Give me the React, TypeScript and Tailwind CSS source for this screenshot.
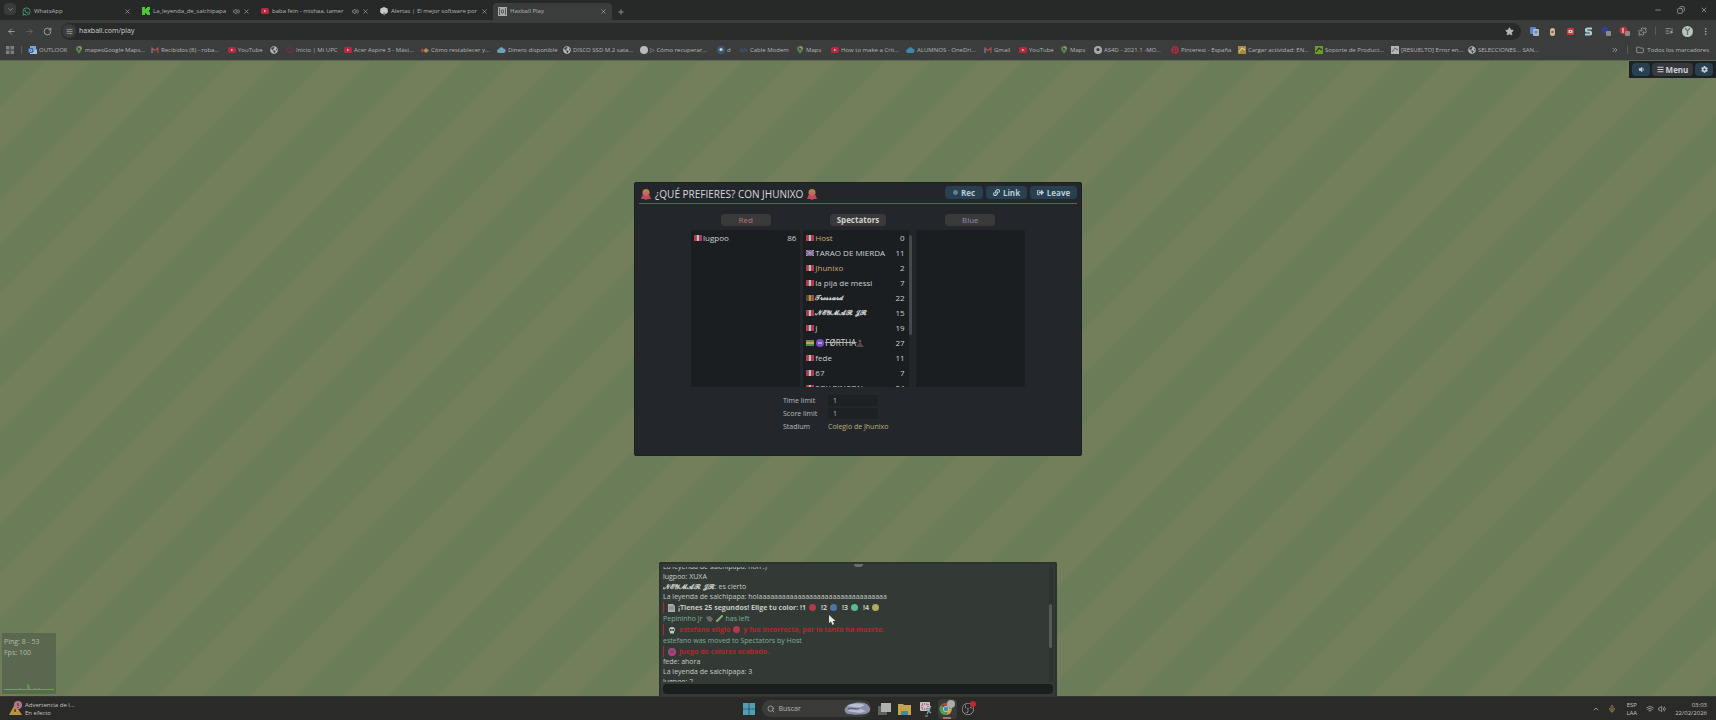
import React from 'react';
import {
  ChevronDown, ChevronUp, X, Plus, ArrowLeft, ArrowRight, RotateCw, SlidersHorizontal, Star, Puzzle,
  ListMusic, MoreVertical, Minus, Copy, Folder, Volume2, Search, ChevronsRight, Wifi, Mic,
} from 'lucide-react';
import { FaWhatsapp, FaPinterest, FaGlobeAmericas, FaCog, FaBars, FaVolumeDown, FaLink, FaSignOutAlt, FaCircle } from 'react-icons/fa';
import { SiObsstudio } from 'react-icons/si';
import clsx from 'clsx';

const tabs = [
  { title: 'WhatsApp', icon: <FaWhatsapp size={9} className="text-[#4fae84]" />, audio: false },
  { title: 'La_leyenda_de_salchipapa', icon: <KickIcon />, audio: true },
  { title: 'baba fein - mishaa, tamer', icon: <YtIcon />, audio: true },
  { title: 'Alertas | El mejor software por', icon: <Shield />, audio: false },
  { title: 'Haxball Play', icon: <HaxIcon />, audio: false, active: true },
];

function KickIcon() {
  return (
    <svg width="8" height="8" viewBox="0 0 8 8">
      <path d="M0 0h3v2h1V1h1V0h3v3H7v2h1v3H5V7H4V6H3v2H0z" fill="#4fc639" />
    </svg>
  );
}

function YtIcon() {
  return (
    <svg width="8" height="8" viewBox="0 0 8 8">
      <rect y="1" width="8" height="6" rx="1.5" fill="#b32a40" />
      <path d="M3 2.7L5.500 4 3 5.300z" fill="#e0aab2" />
    </svg>
  );
}

function Shield() {
  return (
    <svg width="8" height="9" viewBox="0 0 8 9">
      <path d="M4 0l3.500 1.500L8 5 6 7H2L0 5l.5-3.500z" fill="#c9c9c9" />
      <path d="M4 5l1.500 1L4 9 3 6z" fill="#8a8a8a" />
    </svg>
  );
}

function HaxIcon() {
  return (
    <svg width="9" height="9" viewBox="0 0 9 9">
      <rect width="9" height="9" fill="#a9aba8" />
      <path d="M1.500 1v7M7.500 1v7M3.500 3h2v3h-2z" stroke="#5c5e5c" strokeWidth="1" fill="none" />
    </svg>
  );
}

function GmailIcon() {
  return (
    <svg width="8" height="6" viewBox="0 0 8 6">
      <path d="M1 6V1l3 2.500L7 1v5" stroke="#a5544c" strokeWidth="1.200" fill="none" />
      <path d="M1 6V2" stroke="#5d7fa8" strokeWidth="1.200" />
    </svg>
  );
}

function Pin() {
  return (
    <svg width="6" height="8" viewBox="0 0 6 8">
      <path d="M3 8C2 5.500 0 5 0 3a3 3 0 016 0c0 2-2 2.500-3 5z" fill="#5f7f57" />
      <path d="M3 0a3 3 0 013 3L3 3z" fill="#98915c" />
      <circle cx="3" cy="3" r="1" fill="#3a3b3b" />
    </svg>
  );
}

function Dot({ fill, inner }: { fill: string; inner?: string }) {
  return (
    <svg width="8" height="8" viewBox="0 0 8 8">
      <circle cx="4" cy="4" r="4" fill={fill} />
      {inner && <circle cx="4" cy="3.500" r="1.600" fill={inner} />}
    </svg>
  );
}

function Square({ fill, mark }: { fill: string; mark: string }) {
  return (
    <svg width="8" height="8" viewBox="0 0 8 8">
      <rect width="8" height="8" fill={fill} />
      <path d="M1 6l3-4 3 2" stroke={mark} strokeWidth="1.200" fill="none" />
    </svg>
  );
}

function CloudIcon({ fill }: { fill: string }) {
  return (
    <svg width="9" height="6" viewBox="0 0 9 6">
      <path d="M2 6a2 2 0 010-4 2.500 2.500 0 014.500-.5A2.300 2.300 0 017 6z" fill={fill} />
    </svg>
  );
}

function OutlookIcon() {
  return (
    <svg width="9" height="8" viewBox="0 0 9 8">
      <rect x="2" width="6" height="5" fill="#7fa4d0" />
      <path d="M2 4l3 2 4-3v5H2z" fill="#a9c0dc" />
      <rect y="2" width="5" height="5" rx="1" fill="#2f62a8" />
      <circle cx="2.500" cy="4.500" r="1.200" stroke="#cdd9ea" strokeWidth=".8" fill="none" />
    </svg>
  );
}

function UpcIcon() {
  return (
    <svg width="8" height="8" viewBox="0 0 8 8">
      <path d="M1 2c0 6 6 6 6 1M4 0v3" stroke="#85293a" strokeWidth="1.200" fill="none" />
    </svg>
  );
}

function Diamond() {
  return (
    <svg width="9" height="7" viewBox="0 0 9 7">
      <path d="M0 3.500L3 1v5z" fill="#a04444" />
      <path d="M3 3.500L6 1l3 2.500L6 6z" fill="#b08a5c" />
    </svg>
  );
}

function Bars() {
  return (
    <svg width="8" height="6" viewBox="0 0 8 6">
      <path d="M1 1v4M3 2v3M5 1v4M7 2v3" stroke="#43586e" strokeWidth="1" />
    </svg>
  );
}

const globe = <FaGlobeAmericas size={8} className="text-[#b4b4b4]" />;

const bookmarks = [
  { label: 'OUTLOOK', width: 'w-[46px]', icon: <OutlookIcon /> },
  { label: 'mapesGoogle Maps...', width: 'w-[76px]', icon: <Pin /> },
  { label: 'Recibidos (8) - roba...', width: 'w-[77px]', icon: <GmailIcon /> },
  { label: 'YouTube', width: 'w-[42px]', icon: <YtIcon /> },
  { label: '', width: 'w-[16px]', icon: globe },
  { label: 'Inicio | Mi UPC', width: 'w-[58px]', icon: <UpcIcon /> },
  { label: 'Acer Aspire 3 - Máxi...', width: 'w-[77px]', icon: <YtIcon /> },
  { label: 'Cómo restablecer y...', width: 'w-[77px]', icon: <Diamond /> },
  { label: 'Dinero disponible', width: 'w-[65px]', icon: <CloudIcon fill="#6fa0b8" /> },
  { label: 'DISCO SSD M.2 sata...', width: 'w-[77px]', icon: globe },
  { label: '▷ Cómo recuperar...', width: 'w-[77px]', icon: <Dot fill="#b9b9b9" /> },
  { label: 'd', width: 'w-[23px]', icon: <Dot fill="#3b5878" inner="#c8d2dc" /> },
  { label: 'Cable Modem', width: 'w-[56px]', icon: <Bars /> },
  { label: 'Maps', width: 'w-[35px]', icon: <Pin /> },
  { label: 'How to make a Crit...', width: 'w-[76px]', icon: <YtIcon /> },
  { label: 'ALUMNOS - OneDri...', width: 'w-[77px]', icon: <CloudIcon fill="#3f87ad" /> },
  { label: 'Gmail', width: 'w-[35px]', icon: <GmailIcon /> },
  { label: 'YouTube', width: 'w-[41px]', icon: <YtIcon /> },
  { label: 'Maps', width: 'w-[34px]', icon: <Pin /> },
  { label: 'AS4D - 2021.1 -MO...', width: 'w-[77px]', icon: <Dot fill="#a9a9a9" inner="#3a3b3b" /> },
  { label: 'Pinterest - España', width: 'w-[67px]', icon: <FaPinterest size={8} className="text-[#c02a45]" /> },
  { label: 'Cargar actividad: EN...', width: 'w-[77px]', icon: <Square fill="#a88a45" mark="#d8c890" /> },
  { label: 'Soporte de Product...', width: 'w-[76px]', icon: <Square fill="#6f9a2c" mark="#24301a" /> },
  { label: '[RESUELTO] Error en...', width: 'w-[77px]', icon: <Square fill="#b5b5b5" mark="#777777" /> },
  { label: 'SELECCIONES... SAN...', width: 'w-[77px]', icon: globe },
];

function Extensions() {
  return (
    <>
      <svg width="9" height="9" viewBox="0 0 9 9">
        <rect width="6" height="7" rx="1" fill="#5c83c8" />
        <rect x="3" y="2" width="6" height="7" rx="1" fill="#a8b4cc" />
        <path d="M4.500 5h3M6 4v3" stroke="#5a6b8a" strokeWidth=".8" />
      </svg>
      <svg width="9" height="9" viewBox="0 0 9 9">
        <rect x="2" y="1" width="5" height="8" rx="2.500" fill="#c9bba2" />
        <circle cx="4.500" cy="5" r="1.300" fill="#a8543c" />
      </svg>
      <svg width="9" height="9" viewBox="0 0 9 9">
        <rect x="1" y="1" width="7" height="7" rx="1.500" fill="#c23c44" />
        <rect x="2.500" y="3" width="4" height="3" fill="#e0c0c0" />
        <rect x="4" y="4" width="1" height="1" fill="#c23c44" />
      </svg>
      <svg width="9" height="9" viewBox="0 0 9 9">
        <path d="M8 1.500H3.500a1.500 1.500 0 000 3h2a1.500 1.500 0 010 3H1" stroke="#a9ccd6" strokeWidth="2.200" fill="none" />
      </svg>
      <svg width="11" height="11" viewBox="0 0 11 11">
        <circle cx="4" cy="4" r="3.500" fill="#33408f" />
        <rect x="5" y="5" width="5" height="5" rx="1" fill="#8a8a8a" />
      </svg>
      <svg width="11" height="11" viewBox="0 0 11 11">
        <circle cx="4.500" cy="4.500" r="4" fill="#b8323a" />
        <path d="M4 2v5" stroke="#e0d0d0" strokeWidth="1.300" />
        <rect x="6" y="5" width="5" height="5" rx="1" fill="#8a8a8a" />
      </svg>
    </>
  );
}

function Browser() {
  return (
    <header className="shrink-0 text-[6px] leading-[8px] text-[#b4b6b4]">
      <div className="h-5 bg-[#272928] flex items-end">
        <div className="w-[17px] h-[17px] shrink-0 pl-1">
          <button aria-label="Buscar pestañas" className="size-3 rounded-sm bg-[#3a3c3b] flex items-center justify-center">
            <ChevronDown size={7} />
          </button>
        </div>
        {tabs.map((tab) => (
          <div
            key={tab.title}
            className={clsx(
              'w-[119px] h-[17px] shrink-0 flex items-center gap-[3px] px-[5px] pb-px rounded-t',
              tab.active && 'bg-[#3b3d3c]'
            )}
          >
            <span className="w-[9px] shrink-0 flex justify-center">{tab.icon}</span>
            <span className="whitespace-nowrap">{tab.title}</span>
            {tab.audio && <Volume2 size={7} className="ml-auto shrink-0" />}
            <button aria-label={`Cerrar ${tab.title}`} className={clsx('shrink-0', !tab.audio && 'ml-auto')}>
              <X size={7} />
            </button>
          </div>
        ))}
        <button aria-label="Nueva pestaña" className="h-[17px] px-[5px] flex items-center"><Plus size={8} /></button>
        <div className="ml-auto h-5 flex items-center gap-[15px] pr-2">
          <button aria-label="Minimizar"><Minus size={8} /></button>
          <button aria-label="Restaurar"><Copy size={8} className="-scale-x-100" /></button>
          <button aria-label="Cerrar"><X size={8} /></button>
        </div>
      </div>

      <div className="h-[21px] pt-px bg-[#3b3d3c] flex items-center">
        <div className="w-[61px] shrink-0 flex items-center gap-[9px] pl-[7px]">
          <button aria-label="Atrás"><ArrowLeft size={9} /></button>
          <button aria-label="Adelante" className="text-[#6c6e6c]"><ArrowRight size={9} /></button>
          <button aria-label="Recargar"><RotateCw size={9} /></button>
        </div>
        <div className="flex-1 h-[17px] rounded-full bg-[#292b2a] flex items-center pl-[1px] pr-[7px]">
          <span className="size-[14px] rounded-full bg-[#3b3d3c] flex items-center justify-center">
            <SlidersHorizontal size={7} />
          </span>
          <input
            aria-label="Dirección"
            defaultValue="haxball.com/play"
            className="flex-1 pl-[3px] bg-transparent text-[7px] leading-[10px] text-[#cfd1cf] outline-none"
          />
          <Star size={9} fill="currentColor" />
        </div>
        <div className="flex items-center pl-1 pr-0.5">
          <div className="grid grid-cols-[repeat(7,18px)] justify-items-center items-center">
            <Extensions />
            <Puzzle size={9} />
          </div>
          <span className="w-px h-2 mx-1 bg-[#5a5c5a]" />
          <div className="grid grid-cols-[repeat(3,18px)] justify-items-center items-center">
            <ListMusic size={8} />
            <span className="size-[11px] rounded-full bg-[#b9c4bd] flex items-center justify-center">
              <svg width="7" height="8" viewBox="0 0 7 8"><path d="M1 1l2.500 3L6 1M3.500 4v4" stroke="#66766d" strokeWidth="1.200" fill="none" /></svg>
            </span>
            <MoreVertical size={9} />
          </div>
        </div>
      </div>

      <nav className="h-5 pb-px bg-[#3b3d3c] border-b border-[#5e6650] flex items-center pl-1.5 pr-[7px]">
        <svg width="8" height="8" viewBox="0 0 8 8" className="shrink-0">
          <path d="M0 0h3.500v3.500H0zM4.500 0H8v3.500H4.500zM0 4.500h3.500V8H0zM4.500 4.500H8V8H4.500z" fill="#7d7f7d" />
        </svg>
        <span className="w-px h-2 ml-[7px] mr-[6px] shrink-0 bg-[#5a5c5a]" />
        {bookmarks.map((b, i) => (
          <a key={i} href="#" aria-label={b.label || 'Marcador'} className={clsx('shrink-0 flex items-center gap-[2px] whitespace-nowrap', b.width)}>
            <span className="w-[9px] shrink-0 flex justify-center">{b.icon}</span>
            {b.label}
          </a>
        ))}
        <ChevronsRight size={8} className="ml-auto" />
        <span className="w-px h-2 mx-2 shrink-0 bg-[#5a5c5a]" />
        <a href="#" className="flex items-center gap-[3px] whitespace-nowrap">
          <Folder size={8} />
          Todos los marcadores
        </a>
      </nav>
    </header>
  );
}

const stripes: Record<string, string[]> = {
  pe: ['#b23a4c', '#c9b8b8', '#b23a4c'],
  be: ['#4f4a3c', '#b59a3c', '#a8503c'],
};

function Flag({ code }: { code: string }) {
  return (
    <svg width="8" height="6" viewBox="0 0 8 6" className="shrink-0">
      {stripes[code]?.map((c, i) => <rect key={i} x={i * 2.667} width="2.667" height="6" fill={c} />)}
      {code === 'gb' && (
        <>
          <rect width="8" height="6" fill="#5a5790" />
          <path d="M0 0l8 6M8 0L0 6" stroke="#b9a8bc" strokeWidth="1" />
          <path d="M0 3h8M4 0v6" stroke="#b78a9c" strokeWidth="1" />
        </>
      )}
      {code === 'bo' && (
        <>
          <rect width="8" height="2" fill="#8a7a3c" />
          <rect y="2" width="8" height="2" fill="#b3ac54" />
          <rect y="4" width="8" height="2" fill="#4f8a4c" />
        </>
      )}
    </svg>
  );
}

interface Player {
  name: string;
  avatar: number;
  flag: string;
  admin?: boolean;
  script?: boolean;
}

const red: Player[] = [{ name: 'lugpoo', avatar: 86, flag: 'pe' }];

const spectators: Player[] = [
  { name: 'Host', avatar: 0, flag: 'pe', admin: true },
  { name: 'TARAO DE MIERDA', avatar: 11, flag: 'gb' },
  { name: 'Jhunixo', avatar: 2, flag: 'pe', admin: true },
  { name: 'la pija de messi', avatar: 7, flag: 'pe' },
  { name: '𝓣𝓻𝓸𝓼𝓼𝓪𝓻𝓭', avatar: 22, flag: 'be', script: true },
  { name: '𝓝𝓔𝓨𝓜𝓐𝓡 𝓙𝓡', avatar: 15, flag: 'pe', script: true },
  { name: 'J', avatar: 19, flag: 'pe' },
  { name: 'F̶Ø̶R̶T̶H̶A̶', avatar: 27, flag: 'bo' },
  { name: 'fede', avatar: 11, flag: 'pe' },
  { name: '67', avatar: 7, flag: 'pe' },
  { name: 'SOY RINCON', avatar: 24, flag: 'pe' },
];

function Team({ title, color, players, scroll }: { title: string; color: string; players: Player[]; scroll?: boolean }) {
  return (
    <section className="flex-1 flex flex-col items-center gap-1">
      <button className={clsx('h-3 min-w-[50px] px-[7px] rounded-sm bg-[#3a3a3b] text-[8px] leading-[12px]', color)}>{title}</button>
      <div className="w-full h-[157px] bg-[#1a1e20] flex overflow-hidden">
        <ul className="flex-1">
          {players.map((p) => (
            <li key={p.name} className="h-[15px] pl-[3px] pr-1 flex items-center gap-[1px] text-[8px] leading-[15px] text-[#cdd0d0]">
              <Flag code={p.flag} />
              <span className={clsx('flex-1 flex items-center whitespace-nowrap', p.admin && 'text-[#c8a878]', p.script && 'text-[7px] font-bold')}>
                {p.flag === 'bo' && (
                  <svg width="10" height="8" viewBox="0 0 10 8">
                    <circle cx="5" cy="4" r="4" fill="#7b4cc0" />
                    <path d="M3 4h4" stroke="#c8b0e0" strokeWidth="1.500" />
                  </svg>
                )}
                {p.name}
                {p.flag === 'bo' && (
                  <svg width="8" height="8" viewBox="0 0 8 8">
                    <circle cx="4" cy="2" r="1.500" fill="#6b4a4c" />
                    <path d="M4 3l4 5H0z" fill="#54474c" />
                  </svg>
                )}
              </span>
              <span>{p.avatar}</span>
            </li>
          ))}
        </ul>
        {scroll && (
          <div className="w-1 py-[5px] bg-[#222629]">
            <div className="w-[3px] h-[100px] rounded-full bg-[#45494b]" />
          </div>
        )}
      </div>
    </section>
  );
}

function Octopus() {
  return (
    <svg width="10" height="11" viewBox="0 0 10 11">
      <circle cx="5" cy="3.500" r="3.500" fill="#b9824a" />
      <path d="M2 5h6l2 5H7L5 11 3 10H0z" fill="#c04a5c" />
      <circle cx="5" cy="5" r="2" fill="#c9646a" />
    </svg>
  );
}

function Room() {
  const button = 'h-[13px] rounded-sm bg-[#28404f] text-[8px] leading-[13px] font-bold text-[#bccad4] flex items-center justify-center gap-[3px]';
  return (
    <div className="w-[448px] h-[274px] mt-[104px] px-1 pt-[3px] rounded-xs bg-[#23272c] border border-[#1b2022] flex flex-col">
      <div className="h-[18px] pl-0.5 border-b border-[#b0384f] flex items-start">
        <h1 className="flex items-center gap-1 text-[10px] leading-[17px] text-[#d8dadb] whitespace-nowrap">
          <Octopus />
          ¿QUÉ PREFIERES? CON JHUNIXO
          <Octopus />
        </h1>
        <div className="ml-auto flex gap-[3px]">
          <button className={clsx(button, 'w-[38px]')}><FaCircle size={5} className="text-[#6a7f8c]" />Rec</button>
          <button className={clsx(button, 'w-[41px]')}><FaLink size={7} />Link</button>
          <button className={clsx(button, 'w-[47px]')}><FaSignOutAlt size={7} />Leave</button>
        </div>
      </div>
      <div className="mx-[52px] mt-[10px] flex gap-[3px]">
        <Team title="Red" color="text-[#b8747c]" players={red} />
        <Team title="Spectators" color="text-[#cfd0d0] font-bold" players={spectators} scroll />
        <Team title="Blue" color="text-[#8f8cb0]" players={[]} />
      </div>
      <div className="ml-[144px] mt-[7px] grid grid-cols-[45px_50px] auto-rows-[13px] items-center text-[7px] leading-[10px] text-[#b8bcbe]">
        <label htmlFor="time">Time limit</label>
        <input id="time" defaultValue="1" className="h-[11px] w-full px-[5px] bg-[#1d2124]" />
        <label htmlFor="score">Score limit</label>
        <input id="score" defaultValue="1" className="h-[11px] w-full px-[5px] bg-[#1d2124]" />
        <span>Stadium</span>
        <span className="whitespace-nowrap text-[#bdb07a]">Colegio de Jhunixo</span>
      </div>
    </div>
  );
}

function Ball({ fill }: { fill: string }) {
  return (
    <svg width="7" height="7" viewBox="0 0 7 7">
      <circle cx="3.500" cy="3.500" r="3.500" fill={fill} />
    </svg>
  );
}

const chatLine = 'h-[10px] shrink-0 leading-[10px]';
const noticeLine = 'h-[11px] shrink-0 leading-[11px] flex items-center gap-[3px] text-[#7fae98]';
const announceLine = 'h-[11px] shrink-0 leading-[11px] flex items-center gap-[3px] font-bold border-l border-[#a32a35] pl-1';

function Chat() {
  return (
    <section className="w-[398px] h-[134px] px-0.5 rounded-t-xs bg-[#333a35] border-2 border-b-0 border-[#2b332e] text-[7px] text-[#c6cac6] flex flex-col">
      <div className="w-[9px] h-[3px] shrink-0 self-center rounded-b bg-[#6a706b]" />
      <div className="h-[115px] flex overflow-hidden whitespace-nowrap">
        <div className="flex-1 flex flex-col justify-end">
          <p className={chatLine}>La leyenda de salchipapa: hoñ :)</p>
          <p className={chatLine}>lugpoo: XUXA</p>
          <p className={chatLine}><b>𝓝𝓔𝓨𝓜𝓐𝓡 𝓙𝓡</b>: es cierto</p>
          <p className={chatLine}>La leyenda de salchipapa: holaaaaaaaaaaaaaaaaaaaaaaaaaaaaaaaaa</p>
          <p className={announceLine}>
            <svg width="7" height="8" viewBox="0 0 7 8"><path d="M0 0h5l2 2v6H0z" fill="#a9adab" /><path d="M1 3h5M1 5h5" stroke="#6a6e6c" strokeWidth=".8" /></svg>
            ¡Tienes 25 segundos! Elige tu color: !1 <Ball fill="#b23a4c" />
            <span className="pl-0.5">!2</span> <Ball fill="#4c74a8" />
            <span className="pl-0.5">!3</span> <Ball fill="#5cb898" />
            <span className="pl-0.5">!4</span> <Ball fill="#b0ad5c" />
          </p>
          <p className={noticeLine}>
            Pepininho jr
            <svg width="7" height="7" viewBox="0 0 7 7"><path d="M0 2l4-1 3 3-2 3-3-1z" fill="#6c6a6c" /></svg>
            <svg width="7" height="7" viewBox="0 0 7 7"><path d="M1 6l5-5" stroke="#86b070" strokeWidth="2" strokeLinecap="round" /></svg>
            has left
          </p>
          <p className={clsx(announceLine, 'text-[#b3262c]')}>
            <svg width="8" height="8" viewBox="0 0 8 8">
              <path d="M1 4a3 3 0 016 0c0 1-1 1.500-1 2v1.500H2V6c0-.5-1-1-1-2z" fill="#c4c8c5" />
              <circle cx="2.800" cy="4" r=".9" fill="#222" /><circle cx="5.200" cy="4" r=".9" fill="#222" />
            </svg>
            estefano eligió <Ball fill="#b23a4c" /> y fue incorrecta, por lo tanto ha muerto.
          </p>
          <p className={noticeLine}>estefano was moved to Spectators by Host</p>
          <p className={clsx(announceLine, 'text-[#b3262c]')}>
            <Dot fill="#a0487c" inner="#8c3a64" />
            Juego de colores acabado.
          </p>
          <p className={chatLine}>fede: ahora</p>
          <p className={chatLine}>La leyenda de salchipapa: 3</p>
          <p className="h-[5px] shrink-0 leading-[10px]">lugpoo: 2</p>
        </div>
        <div className="w-1 pt-[37px] bg-[#2d332f]">
          <div className="w-[3px] h-11 rounded-full bg-[#555b57]" />
        </div>
      </div>
      <input aria-label="Chat" className="h-[10px] mt-0.5 w-full rounded-sm bg-[#1a1e1e] outline-none" />
    </section>
  );
}

function Game() {
  const button = 'h-[13px] rounded-sm flex items-center justify-center gap-[2px] text-[8px] leading-[13px] font-bold text-[#c9d0d4]';
  return (
    <main className="relative flex-1 flex flex-col items-center bg-[repeating-linear-gradient(135deg,#6b7c58_0px,#6b7c58_30px,#737e5b_34px,#737e5b_62px,#6b7c58_66px)]">
      <div className="self-end h-[17px] px-[3px] bg-[#1c2125] flex items-center gap-[2px]">
        <button aria-label="Sonido" className={clsx(button, 'w-[18px] bg-[#28404f]')}><FaVolumeDown size={7} /></button>
        <button className={clsx(button, 'w-[41px] bg-[#37393b]')}><FaBars size={7} />Menu</button>
        <button aria-label="Ajustes" className={clsx(button, 'w-[18px] bg-[#28404f]')}><FaCog size={7} /></button>
      </div>
      <Room />
      <div className="w-full mt-auto grid grid-cols-[1fr_auto_1fr] items-end">
        <div className="w-[54px] h-[61px] ml-0.5 mb-0.5 px-0.5 pt-[3px] bg-[#5a6850] text-[7px] leading-[11px] text-[#b3bba9] flex flex-col">
          <span>Ping: 8 - 53</span>
          <span>Fps: 100</span>
          <svg viewBox="0 0 50 8" className="w-full h-2 mt-auto mb-1">
            <path d="M0 7.500h50M16 7V6M24 7V2M25 7V4M31 7V6M35 7V6" stroke="#5cb040" strokeWidth="1" />
          </svg>
        </div>
        <Chat />
      </div>
      <svg width="8" height="10" viewBox="0 0 8 10" className="absolute left-1/2 bottom-[71px] -ml-[30px]">
        <path d="M1 0v8l2-1.500L4.500 10 6 9 4.800 6H7.500z" fill="#e6e8e6" />
      </svg>
    </main>
  );
}

function Taskbar() {
  return (
    <footer className="h-6 shrink-0 bg-[#2a2a28] border-t border-[#33352f] grid grid-cols-[1fr_auto_1fr] items-center text-[6px] leading-[8px] text-[#c3c4c0]">
      <div className="pl-[9px] flex items-center gap-[2px]">
        <svg width="14" height="15" viewBox="0 0 14 15">
          <path d="M6 3l7 11H0z" fill="#b8963f" />
          <circle cx="9" cy="4" r="4" fill="#b8748c" />
          <path d="M9 2v3M9 6v1" stroke="#3a2a30" strokeWidth="1" />
          <path d="M6 8v3" stroke="#4a3c1c" strokeWidth="1.500" />
        </svg>
        <div>
          <p>Advertencia de l...</p>
          <p>En efecto</p>
        </div>
      </div>
      <div className="h-full flex items-center gap-[7px]">
        <button aria-label="Inicio">
          <svg width="12" height="12" viewBox="0 0 12 12">
            <path d="M0 0h5.700v5.700H0zM6.300 0H12v5.700H6.300zM0 6.300h5.700V12H0zM6.300 6.300H12V12H6.300z" fill="#4f9fb8" />
          </svg>
        </button>
        <label className="w-[109px] h-[17px] rounded-full bg-[#3b3c3a] flex items-center gap-1 pl-[5px] pr-[1px]">
          <Search size={8} />
          <input aria-label="Buscar" placeholder="Buscar" className="flex-1 min-w-0 bg-transparent text-[7px] leading-[10px] placeholder:text-[#b4b5b2] outline-none" />
          <svg width="26" height="13" viewBox="0 0 26 13">
            <path d="M2 5C6 0 20-1 24 3s2 8-3 9S4 13 2 11s-2-4 0-6z" fill="#8a8ea8" />
            <path d="M3 4c6-3 12-3 18-1l-6 3zM3 9c5-3 8 1 14-2l5 2-6 2z" fill="#b9bdd0" />
            <path d="M4 7c4-2 7 1 11-1" stroke="#5a5e7c" strokeWidth="1" fill="none" />
          </svg>
        </label>
        <button aria-label="Vista de tareas">
          <svg width="13" height="12" viewBox="0 0 13 12">
            <rect y="3" width="9" height="9" fill="#5f615f" />
            <rect x="3" width="10" height="9" fill="#b0b2af" />
          </svg>
        </button>
        <button aria-label="Explorador">
          <svg width="14" height="12" viewBox="0 0 14 12">
            <path d="M0 1h5l1 1h7v10H0z" fill="#c8a448" />
            <path d="M3 8h7v4H3z" fill="#3f88b0" />
          </svg>
        </button>
        <button aria-label="Recortes">
          <svg width="14" height="16" viewBox="0 0 14 16">
            <rect x="1" y="1" width="10" height="9" rx="1" fill="#d0c0c4" />
            <path d="M3 3h6v5H3z" stroke="#7c2c44" strokeDasharray="1 1" fill="none" />
            <path d="M12 5L8 13M7 8l5 4" stroke="#6fa8b0" strokeWidth="1.300" />
            <path d="M6 15h3" stroke="#9a9c9a" />
          </svg>
        </button>
        <button aria-label="Chrome" className="w-[19px] h-5 -mx-0.5 rounded-sm bg-[#3a3b38] flex justify-center">
          <svg width="16" height="20" viewBox="0 0 16 20">
            <path d="M2 6a6 6 0 0110 1H7z" fill="#b84a3c" />
            <path d="M2 6a6 6 0 005 10l2-5z" fill="#4f9c54" />
            <path d="M12 7a6 6 0 01-5 9l3-6z" fill="#c8a83c" />
            <circle cx="7" cy="10" r="3" fill="#c9cfd4" /><circle cx="7" cy="10" r="2.200" fill="#4a84b8" />
            <circle cx="12" cy="5" r="4" fill="#a9aeaa" />
            <path d="M4 19h8" stroke="#c8867c" strokeWidth="1.500" />
          </svg>
        </button>
        <button aria-label="OBS" className="relative">
          <SiObsstudio size={12} className="text-[#b4b4b4]" />
          <span className="absolute -top-0.5 -right-0.5 size-[6px] rounded-full bg-[#c0282c]" />
        </button>
      </div>
      <div className="pr-[9px] flex items-center justify-end">
        <ChevronUp size={8} className="mr-2" />
        <Mic size={8} className="mr-[10px] text-[#b89c64]" />
        <span className="text-center mr-[9px]">ESP<br />LAA</span>
        <Wifi size={8} className="mr-1" />
        <Volume2 size={8} className="mr-[9px]" />
        <span className="text-right">03:03<br />22/02/2026</span>
      </div>
    </footer>
  );
}

export default function App() {
  return (
    <div className="h-screen flex flex-col overflow-hidden font-['Open_Sans','Noto_Sans',sans-serif]">
      <Browser />
      <Game />
      <Taskbar />
    </div>
  );
}
